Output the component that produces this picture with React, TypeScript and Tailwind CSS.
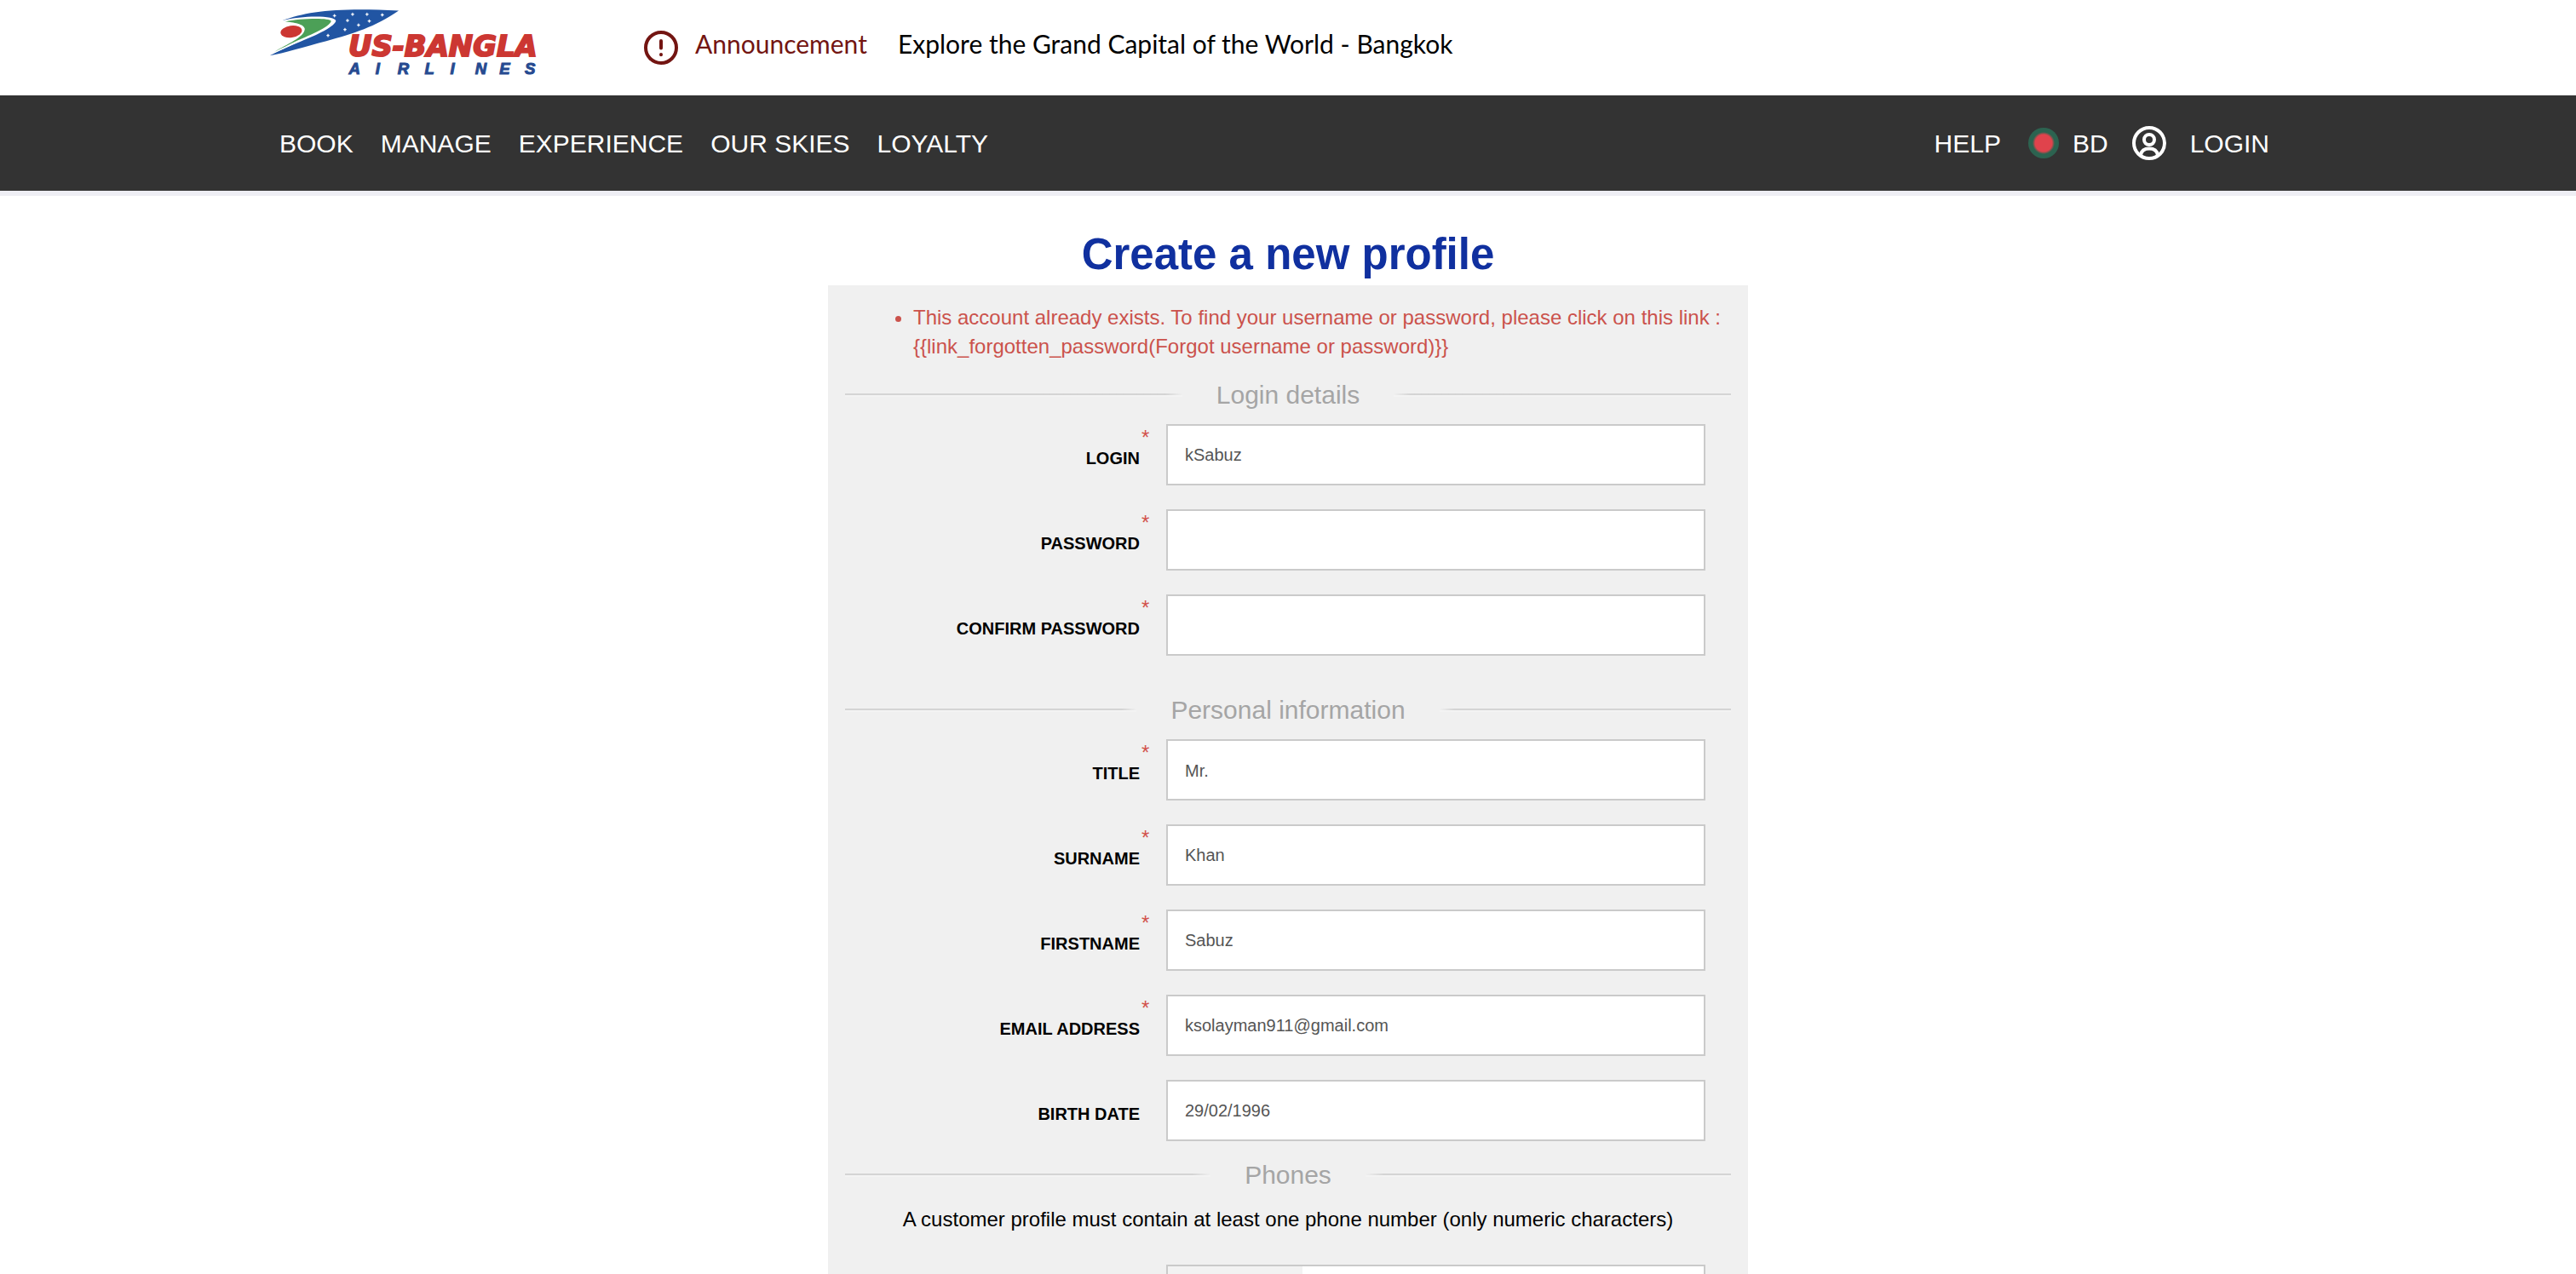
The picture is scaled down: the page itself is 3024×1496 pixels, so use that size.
import type { ReactNode } from "react";

const navLinks = ["BOOK", "MANAGE", "EXPERIENCE", "OUR SKIES", "LOYALTY"];

const stars = [
  [279, 55],
  [343, 50],
  [394, 50],
  [448, 52],
  [325, 72],
  [402, 74],
  [364, 88],
  [316, 104],
  [256, 125],
];

function Logo() {
  return (
    <svg viewBox="48 24 964 246" className="h-[82px] w-80 shrink-0" role="img" aria-label="US-Bangla Airlines">
      <path d="M96 72C180 38 300 26 506 37C420 96 350 116 250 145C170 166 100 188 50 196C110 166 150 150 186 128C225 104 262 88 268 76C262 62 180 66 96 72Z" fill="#2155a3" />
      <path d="M96 72C170 52 284 54 284 74C276 98 200 130 150 150C110 166 80 182 56 190L66 182C110 150 150 128 160 106C168 84 130 78 96 72Z" fill="#fff" />
      <path d="M104 76C160 64 262 62 267 74C262 96 190 124 150 142C120 156 90 172 66 183C110 156 172 132 174 102C172 84 134 78 104 76Z" fill="#4ca057" />
      <ellipse cx="126" cy="111" rx="38" ry="21" transform="rotate(-8 126 111)" fill="#cc3732" />
      {stars.map(([x, y]) => (
        <path
          key={`${x}-${y}`}
          d="M0 -6L2 -2L6 0L2 2L0 6L-2 2L-6 0L-2 -2Z"
          transform={`translate(${x} ${y})`}
          fill="#fff"
          stroke="#fff"
          strokeWidth="1"
        />
      ))}
      <text x="328" y="198" fontFamily="'DejaVu Sans', sans-serif" fontWeight="700" fontStyle="italic" fontSize="102" fill="#cc3732" stroke="#cc3732" strokeWidth="6">
        US-BANGLA
      </text>
      <text x="330 424 502 598 688 776 862 952" y="260" fontFamily="'Liberation Sans', Arial, sans-serif" fontWeight="700" fontStyle="italic" fontSize="56" fill="#264a90" stroke="#264a90" strokeWidth="3">
        AIRLINES
      </text>
    </svg>
  );
}

function AlertIcon() {
  return (
    <svg viewBox="0 0 40 40" className="size-10 shrink-0" fill="none" stroke="#731512" strokeLinecap="round" aria-hidden="true">
      <circle cx="20" cy="20" r="18" strokeWidth="4" />
      <path d="M20 12V20.500M20 28V28.200" strokeWidth="4" />
    </svg>
  );
}

function UserIcon() {
  return (
    <svg viewBox="0 0 40 40" className="size-10 shrink-0" fill="none" stroke="#fff" strokeWidth="4" aria-hidden="true">
      <circle cx="20" cy="20" r="18" />
      <circle cx="20" cy="16" r="6" />
      <path d="M10 34C11 28 15 26.500 20 26.500C25 26.500 29 28 30 34" />
    </svg>
  );
}

function FlagIcon() {
  return (
    <svg viewBox="0 0 36 36" className="size-9 shrink-0" aria-hidden="true">
      <defs>
        <radialGradient id="flag">
          <stop offset="0.550" stopColor="#e0434c" />
          <stop offset="0.720" stopColor="#2c6350" />
        </radialGradient>
      </defs>
      <circle cx="18" cy="18" r="18" fill="url(#flag)" />
    </svg>
  );
}

function SectionTitle({ children }: { children: ReactNode }) {
  return (
    <h2 className="flex items-center text-[30px] leading-10 text-[#a5a5a5]">
      <span className="h-1 flex-1 bg-linear-to-r from-[#d4d4d4] from-95% to-[#f0f0f0] border-b-2 border-[#f3f3f3]" />
      <span className="px-10">{children}</span>
      <span className="h-1 flex-1 bg-linear-to-l from-[#d4d4d4] from-95% to-[#f0f0f0] border-b-2 border-[#f3f3f3]" />
    </h2>
  );
}

const rowClass = "grid grid-cols-[346px_1fr] gap-x-[31px] pr-[30px]";
const boxClass = "h-[72px] w-full rounded-none border-2 border-[#cacaca] bg-white px-5 text-xl text-[#555] outline-none";

function FieldLabel({ id, label, required }: { id: string; label: string; required?: boolean }) {
  return (
    <label htmlFor={id} className="relative pt-6 text-right text-xl leading-8 font-bold text-black">
      {label}
      {required && <span className="absolute top-1 left-full pl-0.5 text-2xl leading-6 font-normal text-[#d2524b]">*</span>}
    </label>
  );
}

type FieldProps = { id: string; label: string; value?: string; type?: string; required?: boolean };

function Field({ id, label, value = "", type = "text", required = true }: FieldProps) {
  return (
    <div className={rowClass}>
      <FieldLabel id={id} label={label} required={required} />
      <input id={id} type={type} defaultValue={value} className={boxClass} />
    </div>
  );
}

export default function App() {
  return (
    <div className="h-screen overflow-hidden bg-white font-['Liberation_Sans',Arial,sans-serif] text-black">
      <header>
        <div className="mx-auto flex h-28 w-full max-w-[2400px] items-start px-1 pt-2">
          <Logo />
          <div className="flex items-center gap-5 pt-7 pl-[120px]">
            <AlertIcon />
            <p className="flex gap-9 pb-2.5 font-[Lato,sans-serif] text-[30px] leading-[30px]">
              <span className="text-[#731512]">Announcement</span>
              <span>Explore the Grand Capital of the World - Bangkok</span>
            </p>
          </div>
        </div>
        <nav className="border-b-[6px] border-[#eeeef4] bg-[#333]">
          <div className="mx-auto flex h-28 w-full max-w-[2400px] items-center justify-between pr-12 pl-4 text-[30px] text-white">
            <div className="flex gap-8">
              {navLinks.map((label) => (
                <a key={label} href="#">
                  {label}
                </a>
              ))}
            </div>
            <div className="flex items-center gap-7">
              <a href="#" className="pr-1">
                HELP
              </a>
              <button type="button" className="flex items-center gap-4">
                <FlagIcon />
                BD
              </button>
              <a href="#" className="flex items-center gap-7">
                <UserIcon />
                LOGIN
              </a>
            </div>
          </div>
        </nav>
      </header>

      <main className="mx-auto w-full max-w-[1080px] pt-[34px]">
        <h1 className="pb-0.5 text-center text-[51px] leading-[69px] font-bold text-[#10309f]">Create a new profile</h1>
        <form className="bg-[#f0f0f0] px-5 pt-[21px]">
          <ul className="ml-20 list-disc text-2xl leading-[34px] text-[#cb524c]">
            <li>
              This account already exists. To find your username or password, please click on this link :{" "}
              {"{{link_forgotten_password(Forgot username or password)}}"}
            </li>
          </ul>

          <section className="mt-5">
            <SectionTitle>Login details</SectionTitle>
            <div className="mt-3.5 flex flex-col gap-7">
              <Field id="login" label="LOGIN" value="kSabuz" />
              <Field id="password" label="PASSWORD" type="password" />
              <Field id="confirm" label="CONFIRM PASSWORD" type="password" />
            </div>
          </section>

          <section className="mt-11">
            <SectionTitle>Personal information</SectionTitle>
            <div className="mt-3.5 flex flex-col gap-7">
              <div className={rowClass}>
                <FieldLabel id="title" label="TITLE" required />
                <select id="title" defaultValue="Mr." className="h-[72px] w-full appearance-none rounded-none border-2 border-[#cacaca] bg-white px-5 pt-0.5 text-xl text-[#555] outline-none">
                  <option>Mr.</option>
                  <option>Mrs.</option>
                </select>
              </div>
              <Field id="surname" label="SURNAME" value="Khan" />
              <Field id="firstname" label="FIRSTNAME" value="Sabuz" />
              <Field id="email" label="EMAIL ADDRESS" type="email" value="ksolayman911@gmail.com" />
              <Field id="birth" label="BIRTH DATE" value="29/02/1996" required={false} />
            </div>
          </section>

          <section className="mt-5">
            <SectionTitle>Phones</SectionTitle>
            <p className="mt-3 text-center text-2xl leading-10">
              A customer profile must contain at least one phone number (only numeric characters)
            </p>
            <div className="mt-[33px] grid grid-cols-[346px_1fr] gap-x-[31px] pr-[30px]">
              <span />
              <div className="flex h-[72px] border-2 border-[#cacaca] bg-white">
                <button type="button" aria-label="Country code" className="w-[158px] bg-[#f2f2f2]" />
                <input aria-label="Phone number" type="tel" className="min-w-0 flex-1 px-5 text-xl text-[#555] outline-none" />
              </div>
            </div>
          </section>
        </form>
      </main>
    </div>
  );
}
